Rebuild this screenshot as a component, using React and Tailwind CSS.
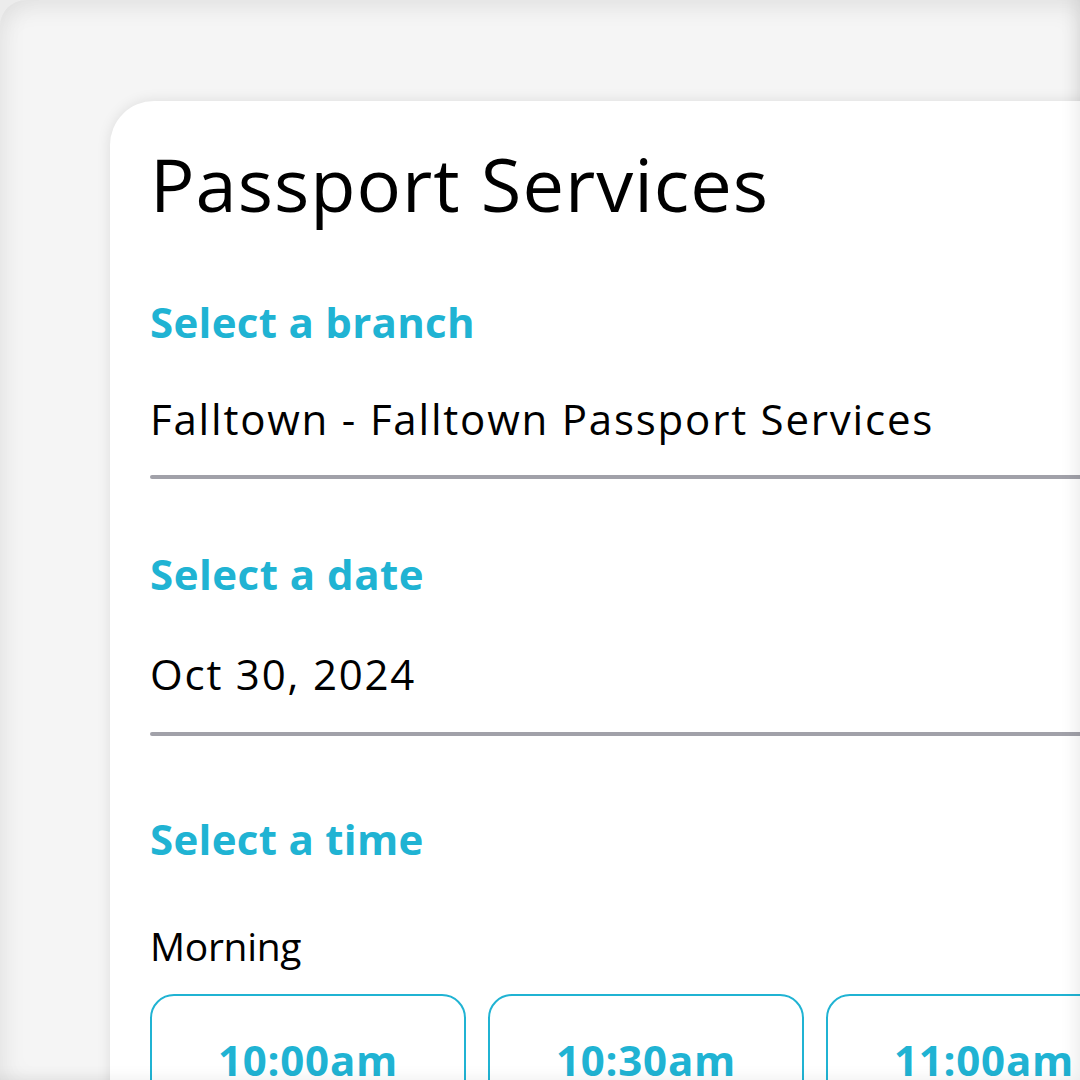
export default function App() {
  const slots = ['10:00am', '10:30am', '11:00am'];

  return (
    <div
      className="relative w-[1080px] h-[1080px] overflow-hidden bg-[#ececec]"
      style={{ fontFamily: '"Open Sans", Lato, sans-serif' }}
    >
      <div className="w-full h-full rounded-tl-[26px] bg-[#f5f5f5] shadow-[inset_0_10px_22px_rgba(0,0,0,0.06),inset_10px_0_22px_rgba(0,0,0,0.03)] pt-[101px] pl-[110px]">
        <div className="w-[990px] h-[1000px] bg-white rounded-tl-[44px] shadow-[0_0_14px_rgba(0,0,0,0.10)] pl-[40px] pt-[46px]">
          <h1 className="text-[74px] leading-none text-black tracking-[1px]">Passport Services</h1>

          <p className="mt-[80px] text-[42px] leading-none font-bold text-[#20b3d3] tracking-[0.3px]">Select a branch</p>
          <p className="mt-[55px] text-[42px] leading-none text-black tracking-[1.8px]">
            Falltown - Falltown Passport Services
          </p>
          <div className="mt-[35px] h-[4px] bg-[#a1a1a9] rounded-l-full" />

          <p className="mt-[74px] text-[42px] leading-none font-bold text-[#20b3d3] tracking-[0.5px]">Select a date</p>
          <p className="mt-[58px] text-[42px] leading-none text-black tracking-[1.8px]">Oct 30, 2024</p>
          <div className="mt-[37px] h-[4px] bg-[#a1a1a9] rounded-l-full" />

          <p className="mt-[82px] text-[42px] leading-none font-bold text-[#20b3d3] tracking-[0.3px]">Select a time</p>
          <p className="mt-[66px] text-[39px] leading-none text-black tracking-[-0.3px]">Morning</p>

          <div className="mt-[29px] flex gap-[22px]">
            {slots.map((s) => (
              <div
                key={s}
                className="w-[316px] h-[110px] shrink-0 border-2 border-[#20b3d3] rounded-[24px] flex justify-center pt-[43px]"
              >
                <span className="text-[42px] leading-none font-bold text-[#20b3d3] tracking-[0.8px]">{s}</span>
              </div>
            ))}
          </div>
        </div>
      </div>
      <div className="pointer-events-none absolute inset-0 shadow-[inset_-14px_-10px_18px_-10px_rgba(0,0,0,0.08)]" />
    </div>
  );
}
